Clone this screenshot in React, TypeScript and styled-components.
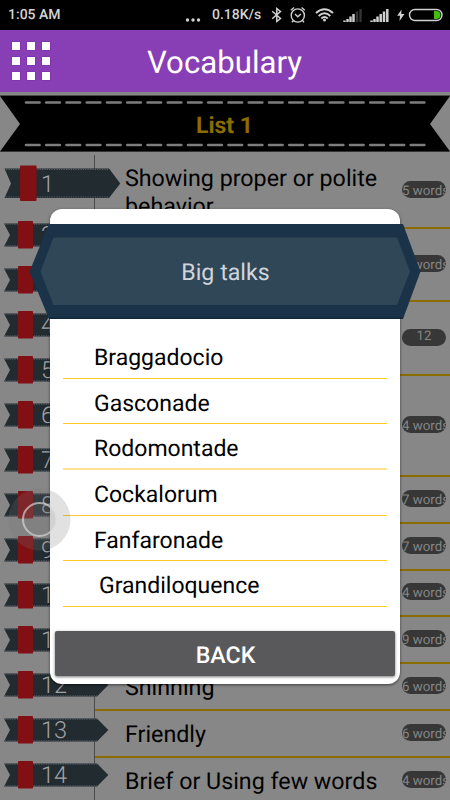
import React from "react";
import styled, { createGlobalStyle } from "styled-components";

const GlobalStyle = createGlobalStyle`
  * { box-sizing: border-box; }
  body { margin: 0; background: #878787; font-family: Roboto, sans-serif; text-rendering: geometricPrecision; }
`;

const Screen = styled.div`
  position: relative;
  width: 450px;
  height: 800px;
  overflow: hidden;
  background: #878787;
  display: flex;
  flex-direction: column;
`;

const StatusBar = styled.div`
  height: 30px;
  flex: none;
  background: #000;
  color: #d4d4d4;
  display: flex;
  align-items: center;
  justify-content: space-between;
  padding: 0 7px 0 8px;
  font-size: 14px;
  font-weight: 500;
`;

const StatusGroup = styled.div`
  display: flex;
  align-items: center;
`;

const Speed = styled.span`
  width: 52px;
  margin-right: 6px;
  white-space: nowrap;
`;

const StatusIcons = styled.svg`
  display: block;
  width: 173px;
  height: 30px;
`;

const Dots = styled.svg`
  display: block;
  width: 27px;
  height: 30px;
`;

const AppBar = styled.header`
  height: 62px;
  flex: none;
  background: #883eb4;
  display: grid;
  grid-template-columns: 60px 330px 60px;
  align-items: center;
`;

const MenuGrid = styled.div`
  display: grid;
  grid-template-columns: repeat(3, 8px);
  grid-auto-rows: 8px;
  gap: 7px;
  padding-left: 12px;
`;

const MenuDot = styled.i`
  background: #fff;
  box-shadow: 0 0 1px #6c109b;
`;

const Title = styled.h1`
  margin: 4px 1px 0 0;
  color: #fff;
  font-size: 31.2px;
  font-weight: 400;
  line-height: 40px;
  text-align: center;
`;

const Banner = styled.div`
  position: relative;
  height: 60px;
  flex: none;
  display: flex;
  justify-content: center;
`;

const BannerShape = styled.svg`
  position: absolute;
  inset: 0;
`;

const ListName = styled.h2`
  position: relative;
  margin: 18px 1px 0 0;
  font-size: 23px;
  font-weight: 700;
  line-height: 32px;
  color: #8b6c00;
`;

const Content = styled.main`
  flex: 1;
  min-height: 0;
  display: grid;
  grid-template-columns: 94px 356px;
`;

const RibbonColumn = styled.div`
  padding: 13px 0 0 4px;
  display: flex;
  flex-direction: column;
`;

const RibbonItem = styled.div<{ $first?: boolean }>`
  position: relative;
  z-index: 1;
  width: 118px;
  flex: none;
  height: ${(p) => (p.$first ? 56 : 45)}px;
`;

const RibbonShape = styled.svg`
  position: absolute;
  left: 0;
  top: 0;
`;

const RibbonNumber = styled.span<{ $first?: boolean }>`
  position: relative;
  display: block;
  padding-left: 37px;
  padding-top: ${(p) => (p.$first ? 5 : 0)}px;
  font-size: 23.5px;
  line-height: 29px;
  font-weight: 300;
  color: #a0a3a5;
`;

const Rows = styled.div`
  min-width: 0;
  margin-top: 3px;
  border-left: 1px solid #4b4b4b;
`;

const Row = styled.div<{ $height: number }>`
  height: ${(p) => p.$height}px;
  border-bottom: 2px solid #8b6c00;
  display: grid;
  grid-template-columns: 307px 44px;
  align-items: center;
  overflow: hidden;
`;

const Meaning = styled.div<{ $tall?: boolean }>`
  align-self: ${(p) => (p.$tall ? "start" : "center")};
  padding: ${(p) => (p.$tall ? "10px" : "3px")} 0 0 30px;
  font-size: 23.25px;
  line-height: 27.5px;
  color: #000;
`;

const WordCount = styled.div<{ $wrapped?: boolean }>`
  height: 17px;
  margin-bottom: 2px;
  border-radius: 9px;
  background: #373737;
  color: #858585;
  font-size: 13.3px;
  line-height: ${(p) => (p.$wrapped ? 15 : 21)}px;
  text-align: ${(p) => (p.$wrapped ? "center" : "left")};
  white-space: nowrap;
  overflow: hidden;
`;

const TouchMark = styled.svg`
  position: absolute;
  left: 8px;
  top: 488px;
  z-index: 4;
`;

const Dialog = styled.section`
  position: absolute;
  z-index: 3;
  left: 50px;
  top: 209px;
  width: 350px;
  height: 475px;
  background: #fff;
  border-radius: 12px;
  box-shadow: 0 1px 3px rgba(0, 0, 0, 0.55);
  padding: 15px 5px 8px;
  display: flex;
  flex-direction: column;
`;

const DialogBanner = styled.div`
  position: relative;
  height: 95px;
  flex: none;
  margin: 0 -26px;
  display: flex;
  align-items: center;
  justify-content: center;
`;

const DialogBannerShape = styled.svg`
  position: absolute;
  inset: 0;
`;

const DialogTitle = styled.h3`
  position: relative;
  margin: 0 0 0 1px;
  font-size: 23.2px;
  line-height: 30px;
  font-weight: 400;
  color: #d0d5dc;
`;

const WordList = styled.ul`
  list-style: none;
  margin: 0 8px;
  padding: 14px 0 0;
  flex: 1;
`;

const Word = styled.li<{ $indent?: boolean; $soft?: boolean }>`
  height: 45.65px;
  padding: 9px 0 0 ${(p) => (p.$indent ? 36 : 31)}px;
  border-bottom: ${(p) => (p.$soft ? "2px solid #ffdf94" : "1px solid #ffc928")};
  font-size: 23px;
  line-height: 32px;
  color: #000;
`;

const BackButton = styled.button`
  height: 45px;
  flex: none;
  border: 0;
  border-radius: 2px;
  background: #59595b;
  box-shadow: 0 1px 3px rgba(0, 0, 0, 0.55);
  color: #fff;
  font: 500 23.2px/45px Roboto, sans-serif;
  text-rendering: geometricPrecision;
  padding: 2px 0 0 1px;
`;

const rows: { text: string; count: string; height: number }[] = [
  { text: "Showing proper or polite behavior", count: "5 words", height: 73.5 },
  { text: "", count: "5 words", height: 73.5 },
  { text: "", count: "12", height: 74 },
  { text: "", count: "4 words", height: 101 },
  { text: "", count: "7 words", height: 46.8 },
  { text: "", count: "7 words", height: 46.8 },
  { text: "", count: "4 words", height: 46.8 },
  { text: "", count: "9 words", height: 46.8 },
  { text: "Shinning", count: "6 words", height: 46.8 },
  { text: "Friendly", count: "6 words", height: 46.8 },
  { text: "Brief or Using few words", count: "4 words", height: 46.8 },
];

const words = ["Braggadocio", "Gasconade", "Rodomontade", "Cockalorum", "Fanfaronade", "Grandiloquence"];

function Ribbon({ n }: { n: number }) {
  const first = n === 1;
  return (
    <RibbonItem $first={first}>
      {first ? (
        <RibbonShape width="118" height="37" viewBox="0 0 118 37">
          <path d="M.5 3.5H105L116.300 18.500 105 33H.5L7 18.500Z" fill="#222b30" />
          <path d="M2 4.500H105M2 32H105" stroke="#59636a" strokeDasharray="1.200 1.200" />
          <rect x="16" y=".5" width="16.500" height="35.500" rx=".7" fill="#801014" />
        </RibbonShape>
      ) : (
        <RibbonShape width="106" height="29" viewBox="0 0 106 29">
          <path d="M0 2.500H93L104.300 14 93 25.500H0L6 14Z" fill="#222b30" />
          <path d="M1 3.200H93M1 24.800H93" stroke="#59636a" strokeDasharray="1.200 1.200" />
          <rect x="14" y="0" width="15" height="27.500" rx=".7" fill="#801014" />
        </RibbonShape>
      )}
      <RibbonNumber $first={first}>{n}</RibbonNumber>
    </RibbonItem>
  );
}

function SystemIcons() {
  return (
    <StatusIcons viewBox="270 0 173 30" fill="none" stroke="#d0d0d0">
      <path d="M272.200 11.200 280.500 18.500 276.800 21.500V8.500L280.500 11.500 272.200 18.800" strokeWidth="1.500" />
      <circle cx="297.800" cy="15.500" r="6.600" strokeWidth="1.400" />
      <path d="M295 14 297.800 16.700 300.800 14M290.800 10.200 294 7.500M304.800 10.200 301.600 7.500M293.500 20.500 292 22.200M302.500 20.500 304 22.200" strokeWidth="1.400" />
      <path d="M316 13Q324.500 5.500 333 13M318.700 16Q324.500 10.500 330.300 16M321.300 18.500Q324.500 15.500 327.700 18.500" strokeWidth="2" />
      <circle cx="324.500" cy="20" r="1.500" fill="#d0d0d0" stroke="none" />
      <path d="M344.500 22V20.500M347.500 22V19M350.500 22V16.500M353.500 22V14" strokeWidth="2.400" />
      <path d="M357 22V11.500M360.500 22V9" stroke="#333" strokeWidth="2.400" />
      <path d="M371.500 22V20.500M374.500 22V19M377.500 22V16.500M380.700 22V14M384 22V11.500M387.300 22V9" strokeWidth="2.500" />
      <path d="M401.500 9.500 397.200 15.700H400L399.500 21 404.500 14H401.300Z" fill="#d0d0d0" stroke="none" />
      <rect x="409.500" y="9.500" width="32.500" height="11" rx="5.500" strokeWidth="1.400" />
      <path d="M434 11H437Q440.500 11.500 440.500 15T437 19H434Z" fill="#43bd08" stroke="none" />
    </StatusIcons>
  );
}

export default function App() {
  return (
    <>
      <GlobalStyle />
      <Screen>
        <StatusBar>
          <span>1:05 AM</span>
          <StatusGroup>
            <Dots viewBox="0 0 27 30" fill="#d0d0d0">
              <circle cx="2.500" cy="20" r="1.700" />
              <circle cx="8" cy="20" r="1.700" />
              <circle cx="13.500" cy="20" r="1.700" />
            </Dots>
            <Speed>0.18K/s</Speed>
            <SystemIcons />
          </StatusGroup>
        </StatusBar>
        <AppBar>
          <MenuGrid>
            {Array.from({ length: 9 }, (_, i) => (
              <MenuDot key={i} />
            ))}
          </MenuGrid>
          <Title>Vocabulary</Title>
        </AppBar>
        <Banner>
          <BannerShape width="450" height="60" viewBox="0 0 450 60">
            <path d="M0 3.500H450M0 60H450" stroke="#4c4c4c" />
            <path d="M0 4H450L430 32 450 59.500H0L20 32Z" fill="#000" />
            <path d="M26 10.500H427M26 53H427" stroke="#7d7d7d" strokeWidth="2.600" strokeLinecap="round" strokeDasharray="13.600 6.650" />
          </BannerShape>
          <ListName>List 1</ListName>
        </Banner>
        <Content>
          <RibbonColumn>
            {Array.from({ length: 14 }, (_, i) => (
              <Ribbon key={i} n={i + 1} />
            ))}
          </RibbonColumn>
          <Rows>
            {rows.map((r, i) => (
              <Row key={i} $height={r.height}>
                <Meaning $tall={i === 0}>{r.text}</Meaning>
                <WordCount $wrapped={i === 2}>{r.count}</WordCount>
              </Row>
            ))}
          </Rows>
        </Content>
        <Dialog>
          <DialogBanner>
            <DialogBannerShape width="392" height="95" viewBox="0 0 392 95">
              <path d="M20 0H374L391.500 47.500 374 95H20L.5 47.500Z" fill="#1a3348" />
              <path d="M20 94.200H374" stroke="#0b2339" />
              <path d="M24.500 13.500H368L381 47.500 368 81H24.500L11.500 47.500Z" fill="#304757" />
            </DialogBannerShape>
            <DialogTitle>Big talks</DialogTitle>
          </DialogBanner>
          <WordList>
            {words.map((w, i) => (
              <Word key={w} $indent={i === 5} $soft={i === 2}>
                {w}
              </Word>
            ))}
          </WordList>
          <BackButton>BACK</BackButton>
        </Dialog>
        <TouchMark width="64" height="64" viewBox="0 0 64 64">
          <circle cx="31.500" cy="31.500" r="31" fill="#777" fillOpacity=".22" />
          <circle cx="31.500" cy="31.500" r="16.500" fill="#777" fillOpacity=".15" stroke="#ddd" strokeOpacity=".65" strokeWidth="2" />
        </TouchMark>
      </Screen>
    </>
  );
}
